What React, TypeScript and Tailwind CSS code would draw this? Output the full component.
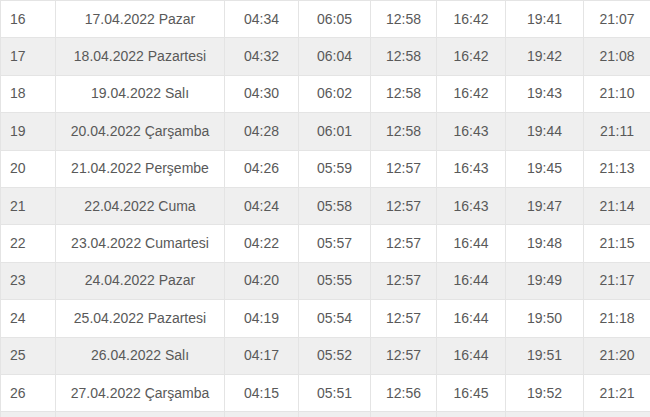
const rows: string[][] = [
    ["16", "17.04.2022 Pazar", "04:34", "06:05", "12:58", "16:42", "19:41", "21:07"],
    ["17", "18.04.2022 Pazartesi", "04:32", "06:04", "12:58", "16:42", "19:42", "21:08"],
    ["18", "19.04.2022 Salı", "04:30", "06:02", "12:58", "16:42", "19:43", "21:10"],
    ["19", "20.04.2022 Çarşamba", "04:28", "06:01", "12:58", "16:43", "19:44", "21:11"],
    ["20", "21.04.2022 Perşembe", "04:26", "05:59", "12:57", "16:43", "19:45", "21:13"],
    ["21", "22.04.2022 Cuma", "04:24", "05:58", "12:57", "16:43", "19:47", "21:14"],
    ["22", "23.04.2022 Cumartesi", "04:22", "05:57", "12:57", "16:44", "19:48", "21:15"],
    ["23", "24.04.2022 Pazar", "04:20", "05:55", "12:57", "16:44", "19:49", "21:17"],
    ["24", "25.04.2022 Pazartesi", "04:19", "05:54", "12:57", "16:44", "19:50", "21:18"],
    ["25", "26.04.2022 Salı", "04:17", "05:52", "12:57", "16:44", "19:51", "21:20"],
    ["26", "27.04.2022 Çarşamba", "04:15", "05:51", "12:56", "16:45", "19:52", "21:21"],
    // next row only peeks in at the bottom edge, its text is out of view
    ["", "", "", "", "", "", "", ""],
];

const widths = ["w-[55px]", "w-[169px]", "w-[74px]", "w-[72px]", "w-[66px]", "w-[69px]", "w-[78px]", "w-[67px]"];

export default function App(): JSX.Element {
    return (
        <div className="w-[650px] h-[417px] overflow-hidden bg-white font-['Liberation_Sans',Arial,sans-serif] text-[14px] text-[#595959]">
            <table className="w-[650px] table-fixed border-collapse">
                <colgroup>
                    {widths.map((w, i) => (
                        <col key={i} className={w} />
                    ))}
                </colgroup>
                <tbody>
                    {rows.map((row, i) => (
                        <tr key={i} className={i % 2 === 1 ? "bg-[#efefef]" : "bg-white"}>
                            {row.map((cell, j) => (
                                <td
                                    key={j}
                                    className={
                                        "h-[37.4px] p-0 align-middle border border-[#e4e4e4] " +
                                        (j === 0 ? "text-left pl-[9px]" : "text-center")
                                    }
                                >
                                    {cell}
                                </td>
                            ))}
                        </tr>
                    ))}
                </tbody>
            </table>
        </div>
    );
}
